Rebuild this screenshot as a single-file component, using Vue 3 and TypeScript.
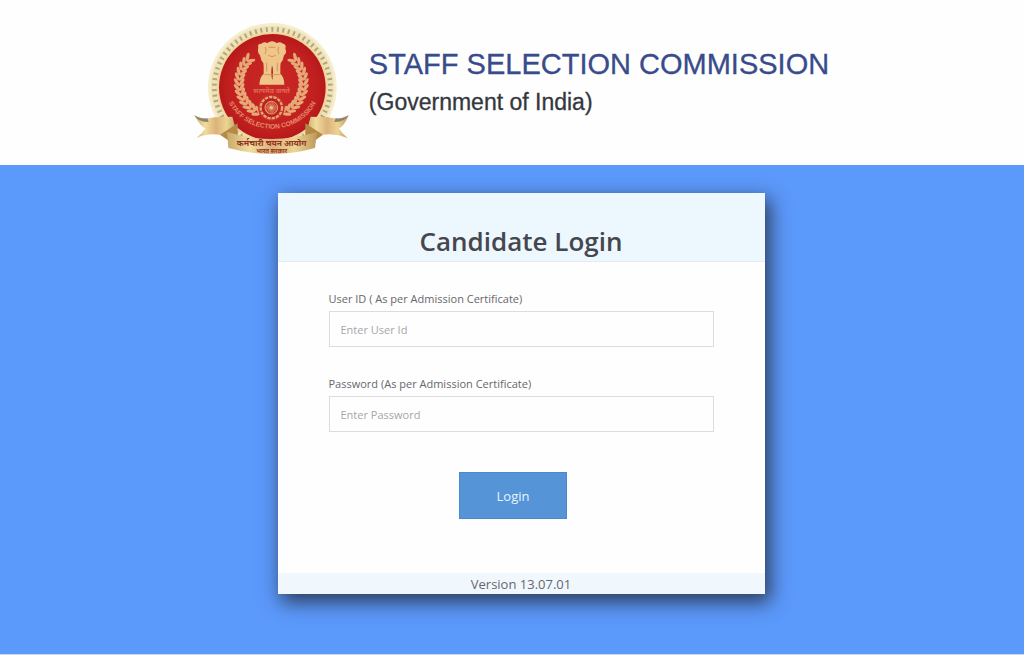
<script setup lang="ts">
import { ref } from 'vue'

interface Leaf {
  x: number
  y: number
  angle: number
}

const userId = ref('')
const password = ref('')

const center = { x: 262, y: 232 }

const teeth: number[] = Array.from({ length: 66 }, (_, i) => (i * 360) / 66)

function wreath(radius: number, tilt: number): Leaf[] {
  return Array.from({ length: 13 }, (_, i) => {
    const deg = 118 + i * 9
    const rad = (deg * Math.PI) / 180
    return {
      x: center.x + radius * Math.cos(rad),
      y: 218 + radius * Math.sin(rad),
      angle: deg + 90 + tilt,
    }
  })
}

const leaves: Leaf[] = [...wreath(107, -32), ...wreath(92, 32)]
const spokes: number[] = Array.from({ length: 12 }, (_, i) => i * 15)
</script>

<template>
  <div class="page">
    <header class="masthead">
      <svg class="emblem" viewBox="0 0 525 465" role="img" aria-label="Staff Selection Commission emblem">
        <defs>
          <linearGradient id="gold" x1="0" y1="0" x2="1" y2="0">
            <stop offset="0" stop-color="#c9a968" />
            <stop offset="0.25" stop-color="#f0dc9e" />
            <stop offset="0.5" stop-color="#dcb27a" />
            <stop offset="0.75" stop-color="#ecd492" />
            <stop offset="1" stop-color="#bd9a5c" />
          </linearGradient>
          <radialGradient id="red">
            <stop offset="0" stop-color="#c92a26" />
            <stop offset="0.8" stop-color="#c2201f" />
            <stop offset="1" stop-color="#b5191b" />
          </radialGradient>
          <path id="arc" d="M118 222 A144 134 0 0 0 406 222" />
        </defs>

        <circle :cx="center.x" :cy="center.y" r="193" fill="#f5edcc" />
        <circle :cx="center.x" :cy="center.y" r="185" fill="#ede2ba" />
        <g stroke="#b5a678" stroke-width="6">
          <line
            v-for="t in teeth"
            :key="t"
            :x1="center.x"
            y1="51"
            :x2="center.x"
            y2="65"
            :transform="`rotate(${t} ${center.x} ${center.y})`"
          />
        </g>
        <circle :cx="center.x" :cy="center.y" r="166" fill="#f2d59a" />
        <circle :cx="center.x" :cy="center.y" r="160" fill="url(#red)" />

        <g fill="#e7a878">
          <g v-for="side in [1, -1]" :key="side" :transform="side === 1 ? '' : 'translate(518 0) scale(-1 1)'">
            <ellipse
              v-for="(leaf, i) in leaves"
              :key="i"
              :cx="leaf.x"
              :cy="leaf.y"
              rx="13"
              ry="5"
              :transform="`rotate(${leaf.angle} ${leaf.x} ${leaf.y})`"
            />
          </g>
        </g>

        <g fill="#efc58a">
          <path d="M220 113 Q216 101 229 101 Q236 93 247 99 Q261 89 275 99 Q287 93 294 101 Q305 103 301 116 Q307 128 297 136 L293 151 Q285 158 286 169 L286 192 Q297 199 298 224 L223 224 Q225 199 236 192 L236 169 Q237 158 229 151 L225 136 Q216 126 220 113 Z" />
          <path d="M261 166 Q267 180 262 211 Q256 190 261 166 Z" fill="#a53827" />
          <g fill="none" stroke="#d8935f" stroke-width="3">
            <path d="M241 111 Q246 122 240 132 M281 111 Q276 122 282 132 M251 112 H271 M250 136 Q261 144 272 136 M238 194 H284 M245 158 V184 M277 158 V184" />
          </g>
        </g>

        <text class="motto" x="260" y="249" text-anchor="middle">सत्यमेव जयते</text>

        <circle cx="259" cy="293" r="40" fill="#c43227" />
        <circle cx="259" cy="293" r="32" fill="#bd211f" stroke="#e8a477" stroke-width="7" stroke-dasharray="10 3" />
        <circle cx="259" cy="293" r="19" fill="none" stroke="#e4a176" stroke-width="3" />
        <g stroke="#dd8f67" stroke-width="2">
          <line
            v-for="s in spokes"
            :key="s"
            x1="240"
            y1="293"
            x2="278"
            y2="293"
            :transform="`rotate(${s} 259 293)`"
          />
        </g>
        <circle cx="259" cy="293" r="5" fill="#efb98a" />

        <text class="ring">
          <textPath href="#arc" startOffset="50%" text-anchor="middle">STAFF SELECTION COMMISSION</textPath>
        </text>

        <path d="M28 316 Q52 331 88 322 L142 320 L158 378 L102 374 Q66 370 34 384 Q54 368 61 355 Q45 348 28 316 Z" fill="url(#gold)" />
        <path d="M491 316 Q462 331 430 322 L377 320 L361 378 L417 374 Q453 370 488 384 Q469 368 462 355 Q478 348 491 316 Z" fill="url(#gold)" />
        <path d="M28 316 Q42 327 67 325 L71 336 Q42 338 28 316 Z M491 316 Q477 327 452 325 L448 336 Q477 338 491 316 Z" fill="#8b8471" />
        <path d="M105 374 L158 340 L158 378 L128 390 Z M414 374 L361 340 L361 378 L392 390 Z" fill="#b58a48" />
        <path d="M126 366 Q260 408 396 366 L390 414 Q260 450 130 414 Z" fill="url(#gold)" />
        <text class="scroll" x="260" y="407" text-anchor="middle">कर्मचारी चयन आयोग</text>
        <text class="scroll scroll-small" x="260" y="428" text-anchor="middle">भारत सरकार</text>
      </svg>
      <div class="titles">
        <h1>STAFF SELECTION COMMISSION</h1>
        <p>(Government of India)</p>
      </div>
    </header>

    <main class="stage">
      <form class="card" @submit.prevent>
        <h2 class="card-head">Candidate Login</h2>
        <div class="card-body">
          <div class="field">
            <label for="user-id">User ID ( As per Admission Certificate)</label>
            <input id="user-id" v-model="userId" type="text" placeholder="Enter User Id" />
          </div>
          <div class="field">
            <label for="password">Password (As per Admission Certificate)</label>
            <input id="password" v-model="password" type="password" placeholder="Enter Password" />
          </div>
          <button type="submit">Login</button>
        </div>
        <footer class="card-foot">Version 13.07.01</footer>
      </form>
    </main>
  </div>
</template>

<style>
body {
  margin: 0;
  background: #5b99fb;
}
</style>

<style scoped>
.page {
  display: flex;
  flex-direction: column;
  min-height: 100vh;
  box-sizing: border-box;
  border-bottom: 1px solid #c5dafb;
  font-family: "Open Sans", "Noto Sans", sans-serif;
}

.masthead {
  display: flex;
  justify-content: center;
  gap: 9px;
  padding: 10px 10px 0 0;
  background: #fefefe;
}

.emblem {
  flex: none;
  width: 175px;
  height: 155px;
}

.motto {
  font: 700 21px "Noto Sans", sans-serif;
  fill: #e1694f;
}

.ring {
  font: 700 20px "Liberation Sans", sans-serif;
  fill: #e58c6c;
}

.scroll {
  font: 700 25px "Noto Sans", sans-serif;
  fill: #943425;
}

.scroll-small {
  font-size: 18px;
}

.titles {
  padding-top: 35px;
  font-family: "Liberation Sans", Arial, sans-serif;
}

h1 {
  margin: 0;
  font-size: 29px;
  font-weight: 400;
  line-height: 38px;
  color: #384b8b;
  -webkit-text-stroke: 0.3px #384b8b;
}

.titles p {
  margin: 0;
  font-size: 23px;
  line-height: 38px;
  color: #34373d;
  -webkit-text-stroke: 0.3px #34373d;
}

.stage {
  flex: 1;
  display: flex;
  justify-content: center;
  align-items: flex-start;
  padding: 28px 0 32px 18px;
  background: #5b99fb;
}

.card {
  width: 100%;
  max-width: 487px;
  background: #fefefe;
  box-shadow: 4px 7px 18px 1px rgba(38, 44, 62, 0.85);
}

.card-head {
  margin: 0;
  padding: 30px 0 2px;
  border-bottom: 1px solid #e3ecf5;
  background: #edf7fe;
  text-align: center;
  font-size: 26px;
  font-weight: 600;
  line-height: 36px;
  color: #45474e;
}

.card-body {
  display: flex;
  flex-direction: column;
  gap: 28px;
  padding: 28px 51px 54px;
}

.field {
  display: flex;
  flex-direction: column;
  gap: 4px;
}

label {
  font-size: 11px;
  line-height: 17px;
  color: #66676b;
}

input {
  box-sizing: border-box;
  width: 100%;
  height: 36px;
  padding: 0 11px;
  border: 1px solid #dcdcdc;
  border-radius: 0;
  background: #fefefe;
  font: 11px "Open Sans", sans-serif;
  color: #55565a;
}

input::placeholder {
  color: #a6a6a8;
  opacity: 1;
}

button {
  align-self: center;
  width: 108px;
  height: 47px;
  margin: 12px 16px 0 0;
  padding: 0;
  border: 1px solid #4c88cb;
  background: #5594d6;
  font: 13px "Open Sans", sans-serif;
  color: #e8f4ff;
}

.card-foot {
  padding-top: 2px;
  background: #f1f8fd;
  text-align: center;
  font-size: 13px;
  line-height: 19px;
  color: #66676d;
}
</style>
